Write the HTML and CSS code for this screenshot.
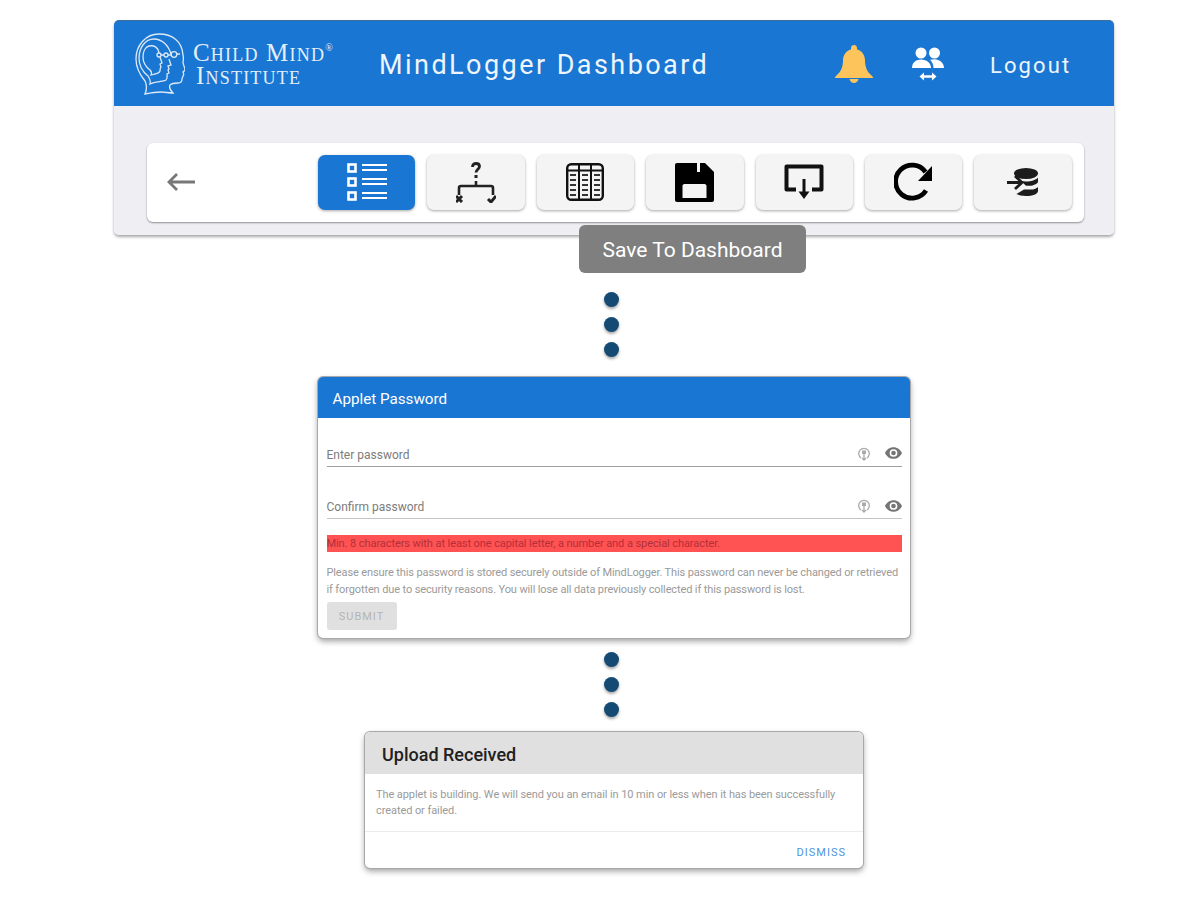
FILE: index.html
```html
<!doctype html>
<html>
<head>
  <meta charset="UTF-8">
  <title>MindLogger Dashboard</title>
  <link rel="stylesheet" href="styles.css">
</head>
<body>
  <div class="shell">
    <div class="topbar">
      <div class="logo">
        <svg class="logo-head" viewBox="0 0 50 62" fill="none" stroke="#dce9f8" stroke-width="1.300">
          <path d="M10 61c5-1 11-2 16-2 4 0 8 1 12 1-3-3-4-6-3-8 2-2 6-2 8-2 3 0 4-1 4-4 0-1 1-2 1-3 1-1 1-2 0-4 1-1 2-1 2-3l-2-6c0-2 1-4 0-8C47 8 37 1 24 1 11 1 1 12 1 26c0 9 4 16 9 22 2 4 2 8 0 13z"/>
          <path d="M36 21C33 11 26 6 19 6 10 6 4 15 4 25c0 8 4 14 9 18 2 3 3 5 2 8 5-3 13-2 16-4 2-2 1-4 1-6l2-1-1-3 1-1-1-3 3-1-2-6"/>
          <path d="M24 20c-1-6-5-8-10-7-4 1-6 6-6 11 0 6 3 10 7 13 1 1 2 3 1 5 3-1 8-1 9-4 0-2 0-3 1-4l-1-3 2-1-2-6"/>
          <circle cx="24" cy="22" r="2"/><circle cx="31" cy="22" r="2"/><circle cx="39" cy="21.500" r="2.800"/>
          <path d="M26 22h3M33 22h3M42 21h3"/>
        </svg>
        <div class="logo-text">
          <span class="logo-line">Child Mind<sup>®</sup></span>
          <span class="logo-line logo-line-two">Institute</span>
        </div>
      </div>
      <div class="title">MindLogger Dashboard</div>
      <svg class="bell" viewBox="0 0 38 38" fill="#fdc45b">
        <path d="M19 0c1.700 0 3 1.300 3 3v1.500c5 1.300 8 5.500 8 11 0 7 2.500 11.500 6 14.500 1.500 1.300 2 2 2 3H0c0-1 .5-1.700 2-3 3.500-3 6-7.500 6-14.500 0-5.500 3-9.700 8-11V3c0-1.700 1.300-3 3-3z"/>
        <path d="M14.500 34h9c-.3 2.300-2.200 4-4.500 4s-4.200-1.700-4.500-4z"/>
      </svg>
      <svg class="users" viewBox="0 0 32 34" fill="#fff">
        <circle cx="9" cy="6" r="5.500"/><circle cx="22.500" cy="6" r="5.500"/>
        <path d="M0 21c0-5 3.500-8.500 9-8.500s10 3.500 10 8.500H0z"/>
        <path d="M18 12.800c1.300-.4 3-.6 4.500-.6 5 0 9.500 3.800 9.500 8.800h-10.500c0-3-1.200-6-3.500-8.200z"/>
        <path d="M7.500 29.500l4.500-4v2.700h8v-2.700l4.500 4-4.500 4v-2.800h-8v2.800z"/>
      </svg>
      <div class="logout">Logout</div>
    </div>

    <div class="band">
      <div class="toolbar">
        <svg class="back" viewBox="0 0 28 18" fill="none" stroke="#777" stroke-width="2.800">
          <path d="M28 9H2M10 1L2 9l8 8"/>
        </svg>
        <div class="tools">
          <div class="tool tool-on">
            <svg viewBox="0 0 40 38" width="40" height="38" fill="none" stroke="#fff">
              <rect x="1.500" y="1.500" width="7" height="7" stroke-width="2.600"/>
              <rect x="1.500" y="15.500" width="7" height="7" stroke-width="2.600"/>
              <rect x="1.500" y="29.500" width="7" height="7" stroke-width="2.600"/>
              <path stroke-width="2.200" d="M15 2h25M15 7h25M15 16h25M15 21h25M15 30h25M15 35h25"/>
            </svg>
          </div>
          <div class="tool">
            <svg viewBox="0 0 40 42" width="40" height="42" fill="none" stroke="#222">
              <path stroke-width="2.800" d="M16.500 6c0-2.500 1.500-3.500 3.500-3.500s3.500 1.200 3.500 3c0 2.500-3.500 3-3.500 6"/>
              <path stroke-width="3" d="M20 14v3"/>
              <path stroke-width="2.600" d="M20 20v5M3 34v-7c0-1 .6-2 2-2h30c1.400 0 2 1 2 2v7"/>
              <path stroke-width="3" d="M0 35l6 6M6 35l-6 6"/>
              <path stroke-width="3" d="M32 38l3 3 5-6"/>
            </svg>
          </div>
          <div class="tool">
            <svg viewBox="0 0 38 38" width="38" height="38" fill="none" stroke="#111">
              <rect x="1.200" y="1.200" width="35.600" height="35.600" rx="4" stroke-width="2.400"/>
              <path stroke-width="2" d="M1 7.500h36M13 1v36M25 1v36"/>
              <path stroke-width="2" stroke="#333" d="M4 12h6M16 12h6M28 12h6M4 17h6M16 17h6M28 17h6M4 22h6M16 22h6M28 22h6M4 27h6M16 27h6M28 27h6M4 32h6M16 32h6M28 32h6"/>
            </svg>
          </div>
          <div class="tool">
            <svg viewBox="0 0 39 39" width="39" height="39">
              <path fill="#000" d="M2 0h28l9 9v28c0 1.100-.9 2-2 2H2c-1.100 0-2-.9-2-2V2C0 .9.900 0 2 0z"/>
              <path fill="#f4f4f4" d="M22 0h3v9h-3zM7.500 23c0-1 .7-2 2-2h20c1.300 0 2 1 2 2v12h-24z"/>
            </svg>
          </div>
          <div class="tool">
            <svg viewBox="0 0 40 36" width="40" height="36" fill="none" stroke="#111" stroke-linejoin="round">
              <path stroke-width="4" d="M12 25.500H2.500V2.500h35v23H28"/>
              <path stroke-width="3" d="M20 15v16"/>
              <path fill="#111" stroke="none" d="M14.500 27.500h11L20 35z"/>
            </svg>
          </div>
          <div class="tool">
            <svg viewBox="0 0 40 40" width="40" height="40" fill="none">
              <path stroke="#000" stroke-width="4.800" d="M32 28.500A16.500 16.500 0 1 1 31.500 10"/>
              <path fill="#000" d="M38 4v15H24z"/>
            </svg>
          </div>
          <div class="tool">
            <svg viewBox="0 0 32 28" width="32" height="28">
              <ellipse cx="19" cy="5.500" rx="12" ry="5.500" fill="#1c1c1c"/>
              <path fill="#1c1c1c" d="M14 13c1.500.3 3.200.5 5 .5 5 0 10-1.500 12-4v4c0 2-3 3.500-7 4.200H19zM17 21.500h9c2-.4 4-1.300 5-2.500v4c0 3-5.500 5-12 5-4 0-7.500-.7-9.500-2z"/>
              <path fill="none" stroke="#1c1c1c" stroke-width="2.800" d="M0 14.500h14M8 8l7 6.500L8 21"/>
            </svg>
          </div>
        </div>
      </div>
    </div>
    <div class="tip">Save To Dashboard</div>
  </div>

  <div class="dots">
    <span class="dot"></span><span class="dot"></span><span class="dot"></span>
  </div>

  <div class="card pass-card">
    <div class="pass-head">Applet Password</div>
    <div class="pass-body">
      <div class="field">
        <span>Enter password</span>
        <svg class="key" viewBox="0 0 12 15" fill="none" stroke="#aaa" stroke-width="1.300"><path d="M3 12a5.300 5.300 0 1 1 6 0M6 8v6M4 12l2 2 2-2"/><rect x="4" y="4.500" width="4" height="3.500" fill="#aaa" stroke="none"/></svg>
        <svg class="eye" viewBox="0 0 22 15" fill="#757575"><path fill-rule="evenodd" d="M11 0C6 0 2 3 0 7.500 2 12 6 15 11 15s9-3 11-7.500C20 3 16 0 11 0zm0 12.500a5 5 0 1 1 0-10 5 5 0 0 1 0 10zm0-8a3 3 0 1 0 0 6 3 3 0 0 0 0-6z"/></svg>
      </div>
      <div class="field field-two">
        <span>Confirm password</span>
        <svg class="key" viewBox="0 0 12 15" fill="none" stroke="#aaa" stroke-width="1.300"><path d="M3 12a5.300 5.300 0 1 1 6 0M6 8v6M4 12l2 2 2-2"/><rect x="4" y="4.500" width="4" height="3.500" fill="#aaa" stroke="none"/></svg>
        <svg class="eye" viewBox="0 0 22 15" fill="#757575"><path fill-rule="evenodd" d="M11 0C6 0 2 3 0 7.500 2 12 6 15 11 15s9-3 11-7.500C20 3 16 0 11 0zm0 12.500a5 5 0 1 1 0-10 5 5 0 0 1 0 10zm0-8a3 3 0 1 0 0 6 3 3 0 0 0 0-6z"/></svg>
      </div>
      <div class="error">Min. 8 characters with at least one capital letter, a number and a special character.</div>
      <p class="note">Please ensure this password is stored securely outside of MindLogger. This password can never be changed or retrieved<br>if forgotten due to security reasons. You will lose all data previously collected if this password is lost.</p>
      <div class="submit">SUBMIT</div>
    </div>
  </div>

  <div class="dots dots-two">
    <span class="dot"></span><span class="dot"></span><span class="dot"></span>
  </div>

  <div class="card upload-card">
    <div class="upload-head">Upload Received</div>
    <p class="upload-text">The applet is building. We will send you an email in 10 min or less when it has been successfully<br>created or failed.</p>
    <div class="upload-foot"><span class="dismiss">DISMISS</span></div>
  </div>
</body>
</html>
```

FILE: styles.css
```css
*{
  margin:0;
  padding:0;
  box-sizing:border-box;
}
body{
  font-family:Roboto,"Noto Sans",sans-serif;
  background:#fff;
  display:flex;
  flex-direction:column;
  align-items:center;
  padding:20px 0 24px 28px;
}

/* header */
.shell{
  width:1000px;
  position:relative;
  border-radius:5px;
  box-shadow:0 2px 3px rgba(0,0,0,.35);
}
.topbar{
  height:86px;
  background:#1976d2;
  border-radius:5px 5px 0 0;
  border-top:1px solid #3f6f9f;
  display:flex;
  align-items:center;
  padding-left:21px;
  color:#fff;
}
.logo{
  display:flex;
  align-items:center;
  width:244px;
}
.logo-head{
  width:50px;
  height:62px;
}
.logo-text{
  margin-left:8px;
  font-family:"Liberation Serif",serif;
  font-variant:small-caps;
  color:#e3eefa;
  font-size:25px;
  line-height:23px;
  letter-spacing:1.200px;
}
.logo-line{
  display:block;
}
.logo-line-two{
  margin-left:3px;
}
.logo-line sup{
  font-size:10px;
  line-height:0;
  vertical-align:10px;
  letter-spacing:0;
}
.title{
  font-size:27px;
  letter-spacing:2.450px;
  width:456px;
  margin-top:3px;
  color:#eef5fc;
}
.bell{
  width:38px;
  height:38px;
}
.users{
  width:32px;
  height:34px;
  margin-left:39px;
}
.logout{
  font-size:22px;
  letter-spacing:2.100px;
  margin:3px 0 0 46px;
  color:#eef5fc;
}

.band{
  height:129px;
  background:#eeeef3;
  border-radius:0 0 5px 5px;
  padding:37px 30px 0 33px;
}
.toolbar{
  height:79px;
  background:#fff;
  border-radius:6px;
  box-shadow:0 1px 2px rgba(0,0,0,.4);
  display:flex;
  align-items:center;
  padding-left:20px;
}
.back{
  width:28px;
  height:18px;
  margin-top:-2px;
}
.tools{
  display:flex;
  gap:12px;
  margin-left:123px;
}
.tool{
  width:97.400px;
  height:55px;
  background:#f4f4f4;
  border-radius:7px;
  box-shadow:0 1px 3px rgba(0,0,0,.35);
  display:flex;
  align-items:center;
  justify-content:center;
}
.tool svg{
  margin-top:-1px;
}
.tool-on{
  background:#1976d2;
}
.tip{
  position:absolute;
  left:465px;
  top:205px;
  width:227px;
  height:48px;
  border-radius:6px;
  background:#7f7f7f;
  color:#fff;
  font-size:21px;
  line-height:50px;
  text-align:center;
}

/* dots between the cards */
.dots{
  display:flex;
  flex-direction:column;
  gap:10px;
  margin:57px 5px 0 0;
}
.dots-two{
  margin-top:14px;
}
.dot{
  width:15px;
  height:15px;
  border-radius:50%;
  background:#154a72;
  box-shadow:0 2px 3px rgba(0,0,0,.35);
}

/* cards */
.card{
  background:#fff;
  border-radius:5px;
  overflow:hidden;
  white-space:nowrap;
  box-shadow:0 0 0 1px #a8a8a8,0 3px 6px rgba(0,0,0,.4);
}
.pass-card{
  width:592px;
  height:261px;
  margin-top:20px;
  margin-left:-1px;
}
.pass-head{
  height:41px;
  background:#1976d2;
  color:#fff;
  font-size:15.200px;
  line-height:44px;
  padding-left:15px;
}
.pass-body{
  padding:0 8px 0 9px;
}
.field{
  height:49px;
  display:flex;
  align-items:flex-end;
  font-size:12px;
  color:#7c7c7c;
  border-bottom:1px solid #a0a0a0;
  padding-bottom:4px;
}
.field span{
  flex:1;
}
.field-two{
  height:52px;
  border-bottom-color:#c4c4c4;
  padding-bottom:4px;
}
.key{
  width:12px;
  height:15px;
  margin:0 15px 1px 0;
}
.eye{
  width:17px;
  height:12px;
  margin-bottom:3px;
}
.field-two .eye{
  margin-bottom:2px;
}
.error{
  height:17px;
  margin-top:16px;
  background:#ff5252;
  color:#b3303a;
  font-size:11px;
  letter-spacing:-.08px;
  line-height:17px;
}
.note{
  margin-top:12px;
  font-size:11px;
  letter-spacing:-.12px;
  line-height:17px;
  color:#9a9a9a;
}
.submit{
  width:70px;
  height:28px;
  margin-top:4px;
  background:#e0e0e0;
  border-radius:3px;
  color:#b4b4b4;
  font-size:11px;
  letter-spacing:1px;
  line-height:29px;
  text-align:center;
}

.upload-card{
  width:498px;
  height:136px;
  margin-top:15px;
}
.upload-head{
  height:42px;
  background:#e0e0e0;
  color:#212121;
  font-size:18px;
  font-weight:500;
  line-height:46px;
  padding-left:17px;
}
.upload-text{
  height:58px;
  padding:13px 11px 0;
  font-size:11px;
  letter-spacing:-.08px;
  line-height:16px;
  color:#9a9a9a;
  border-bottom:1px solid #ececec;
}
.upload-foot{
  display:flex;
  justify-content:flex-end;
  padding:14px 17px 0 0;
}
.dismiss{
  font-size:11px;
  letter-spacing:1px;
  color:#4f94dd;
}
```
